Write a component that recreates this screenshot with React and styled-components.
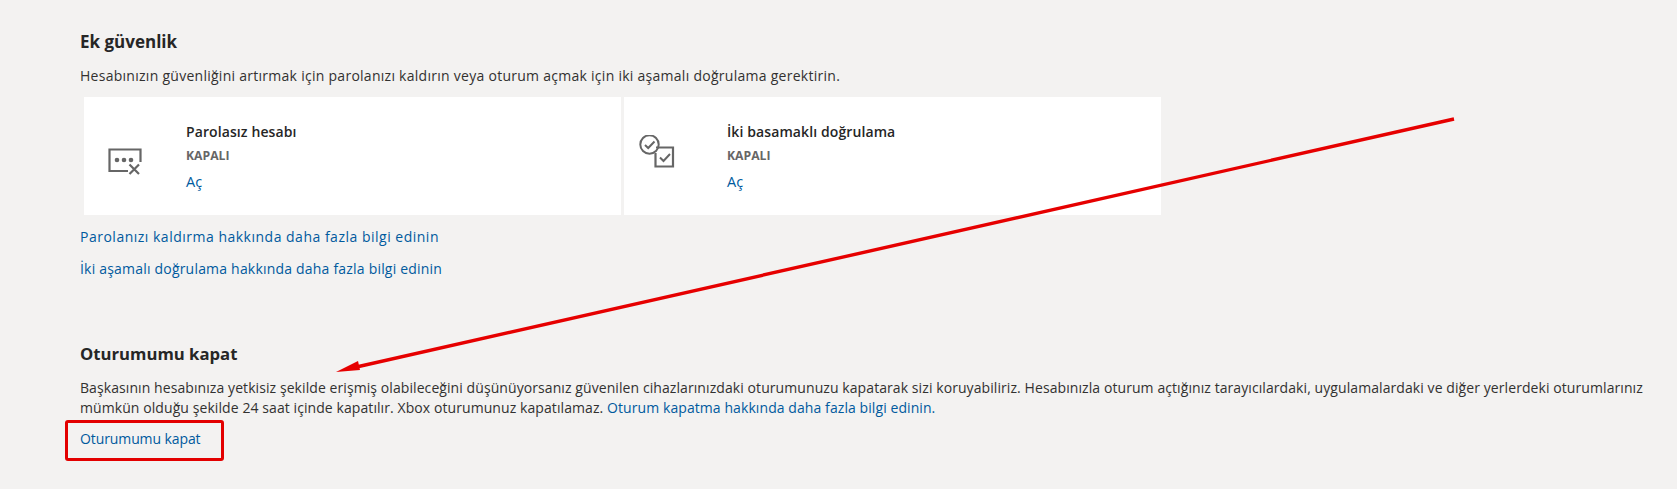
import React from 'react';
import styled, { createGlobalStyle } from 'styled-components';

const GlobalStyle = createGlobalStyle`
  html, body {
    margin: 0;
    padding: 0;
    background: #f3f2f1;
  }
`;

const Page = styled.div`
  position: relative;
  width: 1677px;
  height: 489px;
  overflow: hidden;
  padding: 30px 0 0 80px;
  box-sizing: border-box;
  font-family: "Open Sans", "Noto Sans", "Liberation Sans", sans-serif;
  font-size: 14px;
  line-height: 20px;
  color: #323130;
`;

const Section = styled.section`
  margin-bottom: ${({ $gap }) => $gap || 0}px;
`;

const Heading = styled.h2`
  margin: 0 0 12px;
  font-size: ${({ $size }) => $size}px;
  line-height: 24px;
  font-weight: 700;
  color: #262626;
`;

const Text = styled.p`
  margin: 0;
  white-space: nowrap;
  letter-spacing: ${({ $spread }) => $spread}px;
`;

const Link = styled.a`
  color: #005a9e;
  text-decoration: none;
  letter-spacing: ${({ $spread }) => $spread || 0}px;
`;

const Cards = styled.div`
  display: flex;
  gap: 3px;
  margin: 11px 0 12px 4px;
`;

const Card = styled.div`
  display: flex;
  width: 537px;
  height: 118px;
  background: #fff;
`;

const IconSlot = styled.div`
  flex: none;
  width: ${({ $width }) => $width}px;
  padding-top: ${({ $top }) => $top}px;
  padding-left: ${({ $left }) => $left}px;
  box-sizing: border-box;
  svg {
    display: block;
  }
`;

const CardBody = styled.div`
  padding-top: 24px;
`;

const CardTitle = styled.div`
  font-weight: 600;
  color: #262626;
  line-height: 21px;
  letter-spacing: 0.1px;
`;

const Status = styled.div`
  margin-top: 4px;
  font-size: 12.2px;
  font-weight: 700;
  color: #666;
  line-height: 20px;
`;

const Action = styled(Link)`
  display: block;
  margin-top: 6px;
  font-size: 14.5px;
`;

const LinkRow = styled.div`
  margin-top: ${({ $top }) => $top || 0}px;
  margin-bottom: 12px;
`;

const Annotations = styled.svg`
  position: absolute;
  left: 0;
  top: 0;
  pointer-events: none;
`;

const PasswordIcon = () => (
  <svg width="36" height="30" viewBox="0 0 36 30" fill="none">
    <path d="M20 23H1.5V1.5H32.5V14" stroke="#666" strokeWidth="2.2" />
    <circle cx="9" cy="12" r="2.3" fill="#666" />
    <circle cx="16" cy="12" r="2.3" fill="#666" />
    <circle cx="23" cy="12" r="2.3" fill="#666" />
    <path d="M21.5 16.5L31 26M31 16.5L21.5 26" stroke="#666" strokeWidth="2.2" />
  </svg>
);

const TwoStepIcon = () => (
  <svg width="36" height="34" viewBox="0 0 36 34" fill="none">
    <circle cx="10.5" cy="9.5" r="9.2" stroke="#666" strokeWidth="2" fill="#fff" />
    <path d="M6 10L9.2 13L15.5 6.5" stroke="#666" strokeWidth="2" />
    <path d="M17 12.5H34V31.5H16.5V18" stroke="#666" strokeWidth="2.2" />
    <path d="M21 22.5L24.5 26L31 19" stroke="#666" strokeWidth="2" />
  </svg>
);

export default function App() {
  return (
    <>
      <GlobalStyle />
      <Page>
        <Section $gap={63}>
          <Heading $size={17}>Ek güvenlik</Heading>
          <Text $spread={0.27}>
            Hesabınızın güvenliğini artırmak için parolanızı kaldırın veya oturum açmak için iki aşamalı doğrulama gerektirin.
          </Text>
          <Cards>
            <Card>
              <IconSlot $width={102} $top={51} $left={24}>
                <PasswordIcon />
              </IconSlot>
              <CardBody>
                <CardTitle>Parolasız hesabı</CardTitle>
                <Status>KAPALI</Status>
                <Action href="#">Aç</Action>
              </CardBody>
            </Card>
            <Card>
              <IconSlot $width={103} $top={38} $left={15}>
                <TwoStepIcon />
              </IconSlot>
              <CardBody>
                <CardTitle>İki basamaklı doğrulama</CardTitle>
                <Status>KAPALI</Status>
                <Action href="#">Aç</Action>
              </CardBody>
            </Card>
          </Cards>
          <LinkRow>
            <Link href="#" $spread={0.5}>Parolanızı kaldırma hakkında daha fazla bilgi edinin</Link>
          </LinkRow>
          <LinkRow>
            <Link href="#" $spread={0.2}>İki aşamalı doğrulama hakkında daha fazla bilgi edinin</Link>
          </LinkRow>
        </Section>
        <Section>
          <Heading $size={16.7}>Oturumumu kapat</Heading>
          <Text $spread={0.08}>
            Başkasının hesabınıza yetkisiz şekilde erişmiş olabileceğini düşünüyorsanız güvenilen cihazlarınızdaki oturumunuzu kapatarak sizi koruyabiliriz. Hesabınızla oturum açtığınız tarayıcılardaki, uygulamalardaki ve diğer yerlerdeki oturumlarınız
            <br />
            mümkün olduğu şekilde 24 saat içinde kapatılır. Xbox oturumunuz kapatılamaz.{' '}
            <Link href="#" $spread={0.08}>Oturum kapatma hakkında daha fazla bilgi edinin.</Link>
          </Text>
          <LinkRow $top={11}>
            <Link href="#" $spread={-0.1}>Oturumumu kapat</Link>
          </LinkRow>
        </Section>
        <Annotations width="1677" height="489" viewBox="0 0 1677 489">
          <path d="M1454 119L352 368" stroke="#e60000" strokeWidth="3.4" fill="none" />
          <path d="M336 372L358 361L360 370Z" fill="#e60000" />
          <rect x="66.5" y="421.5" width="156" height="38" rx="1.5" fill="none" stroke="#e30000" strokeWidth="3" />
        </Annotations>
      </Page>
    </>
  );
}
